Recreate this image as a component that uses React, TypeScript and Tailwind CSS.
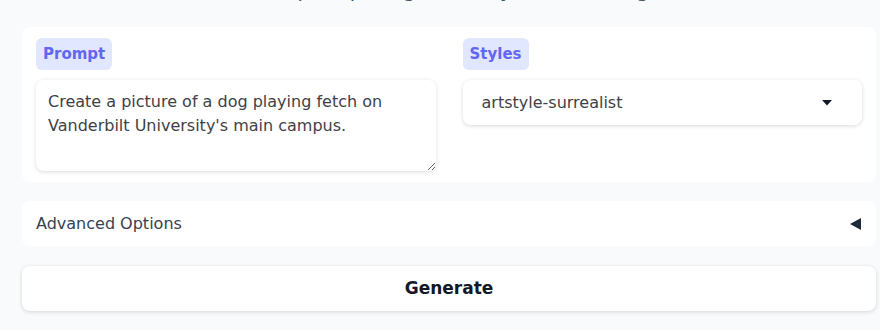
const font = { fontFamily: '"DejaVu Sans", "Noto Sans", sans-serif' }

export default function App() {
  return (
    <div className="min-h-[330px] w-[880px] overflow-hidden bg-[#f9fafb] text-[#374151]" style={font}>
      <h2 className="-mt-[22px] h-[49px] text-center text-[20px] leading-[24px] text-[#4b5563]">
        Enter a prompt to generate your own image
      </h2>

      <div className="ml-[22px] mr-[4px] flex flex-col">
        <div className="grid grid-cols-2 gap-[27px] rounded-lg bg-white px-[14px] py-[11px]">
          <div className="flex flex-col gap-[10px]">
            <span className="flex h-[32px] w-fit items-center rounded-md bg-[#e0e7ff] px-[7px] text-[15px] font-semibold text-[#6366f1]">
              Prompt
            </span>
            <textarea
              className="h-[91px] resize-y rounded-lg bg-white px-[12px] py-[10px] text-[16px] leading-[24px] text-[#3f3f46] shadow-[0_1px_4px_rgba(0,0,0,0.15)] outline-none"
              defaultValue="Create a picture of a dog playing fetch on Vanderbilt University's main campus."
            />
          </div>
          <div className="flex flex-col gap-[10px]">
            <span className="flex h-[32px] w-fit items-center rounded-md bg-[#e0e7ff] px-[7px] text-[15px] font-semibold text-[#6366f1]">
              Styles
            </span>
            <div className="flex h-[45px] items-center justify-between rounded-lg bg-white pl-[19px] pr-[30px] text-[16px] text-[#3f3f46] shadow-[0_1px_4px_rgba(0,0,0,0.15)]">
              <span>artstyle-surrealist</span>
              <svg width="10" height="6" viewBox="0 0 10 6">
                <path d="M0 0 H10 L5 5.5 Z" fill="#111827" />
              </svg>
            </div>
          </div>
        </div>

        <div className="mt-[19px] flex h-[45px] items-center justify-between rounded-lg bg-white pl-[14px] pr-[15px] text-[16px] text-[#374151]">
          <span>Advanced Options</span>
          <svg width="11" height="12" viewBox="0 0 11 12">
            <path d="M11 0 V12 L0 6 Z" fill="#1e293b" />
          </svg>
        </div>

        <button className="mb-[19px] mt-[20px] h-[45px] rounded-lg bg-white text-[17px] font-semibold text-[#111827] shadow-[0_1px_4px_rgba(0,0,0,0.15)]">
          Generate
        </button>
      </div>
    </div>
  )
}
